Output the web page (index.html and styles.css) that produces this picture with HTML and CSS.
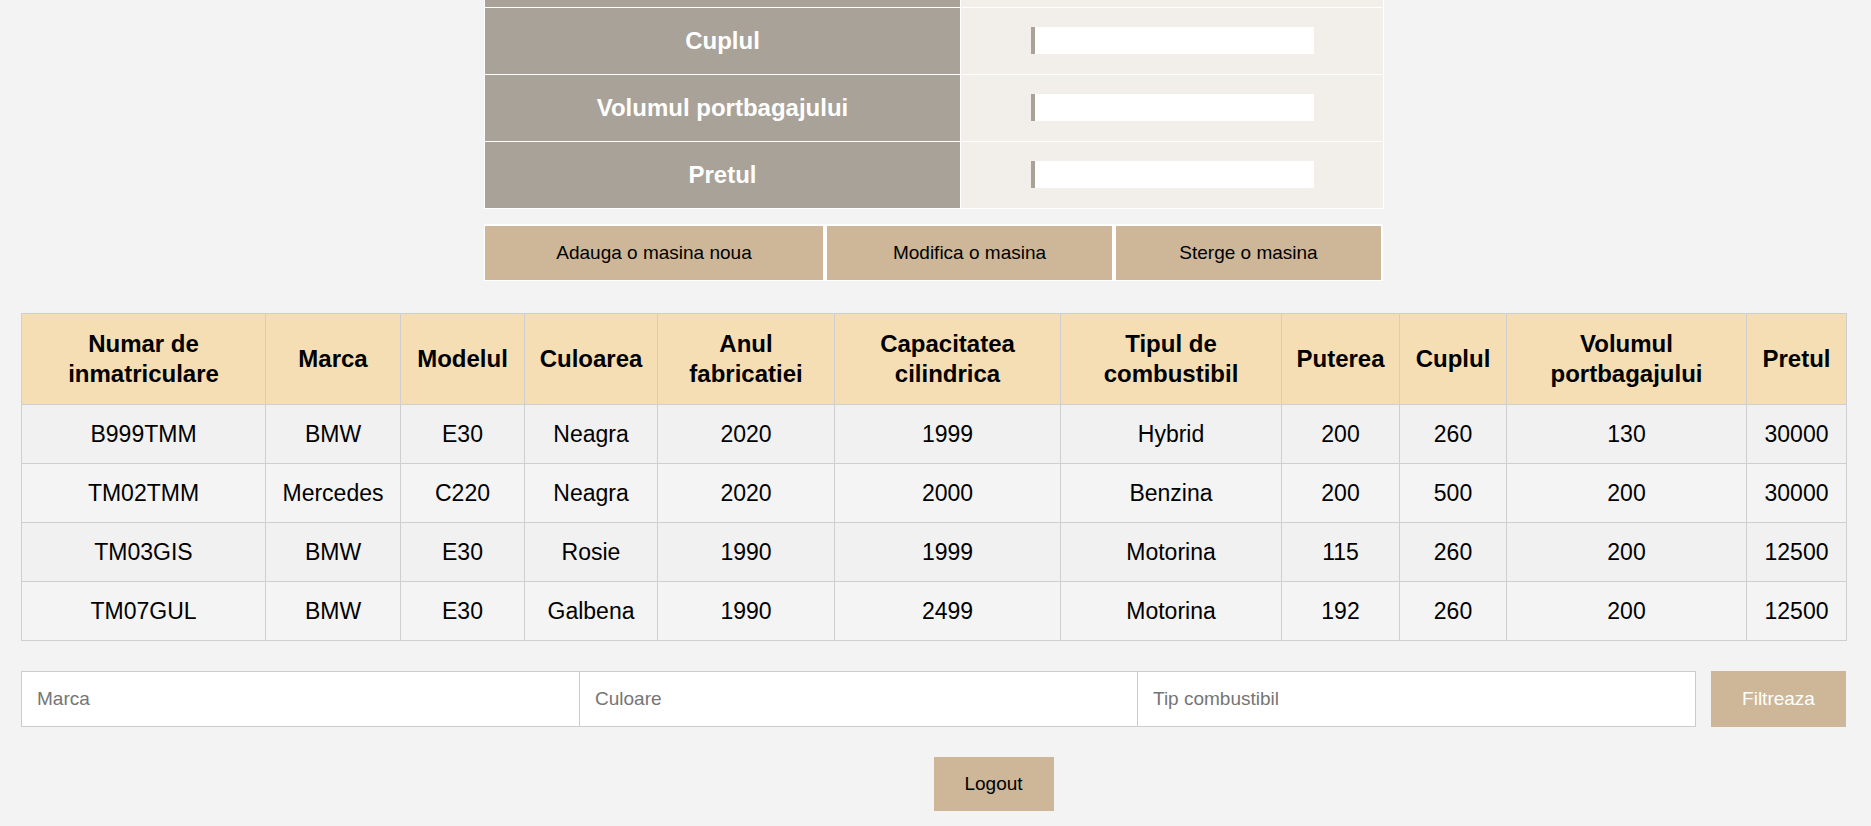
FILE: index.html
```html
<!DOCTYPE html>
<html lang="ro">
<head>
<meta charset="utf-8">
<title>Masini</title>
<link rel="stylesheet" href="styles.css">
</head>
<body>
<main class="page">
  <section class="car-form">
    <table class="form-table">
      <colgroup><col class="label-col"><col class="value-col"></colgroup>
      <tr class="row-cut"><th></th><td></td></tr>
      <tr><th>Cuplul</th><td><input class="field" type="text"></td></tr>
      <tr><th>Volumul portbagajului</th><td><input class="field" type="text"></td></tr>
      <tr><th>Pretul</th><td><input class="field" type="text"></td></tr>
    </table>
    <div class="actions">
      <button class="btn btn-add" type="button">Adauga o masina noua</button>
      <button class="btn btn-edit" type="button">Modifica o masina</button>
      <button class="btn btn-del" type="button">Sterge o masina</button>
    </div>
  </section>

  <table class="cars">
    <colgroup>
      <col class="c1"><col class="c2"><col class="c3"><col class="c4"><col class="c5"><col class="c6">
      <col class="c7"><col class="c8"><col class="c9"><col class="c10"><col class="c11">
    </colgroup>
    <thead>
      <tr>
        <th>Numar de inmatriculare</th><th>Marca</th><th>Modelul</th><th>Culoarea</th><th>Anul fabricatiei</th>
        <th>Capacitatea cilindrica</th><th>Tipul de combustibil</th><th>Puterea</th><th>Cuplul</th>
        <th>Volumul portbagajului</th><th>Pretul</th>
      </tr>
    </thead>
    <tbody>
      <tr><td>B999TMM</td><td>BMW</td><td>E30</td><td>Neagra</td><td>2020</td><td>1999</td><td>Hybrid</td><td>200</td><td>260</td><td>130</td><td>30000</td></tr>
      <tr><td>TM02TMM</td><td>Mercedes</td><td>C220</td><td>Neagra</td><td>2020</td><td>2000</td><td>Benzina</td><td>200</td><td>500</td><td>200</td><td>30000</td></tr>
      <tr><td>TM03GIS</td><td>BMW</td><td>E30</td><td>Rosie</td><td>1990</td><td>1999</td><td>Motorina</td><td>115</td><td>260</td><td>200</td><td>12500</td></tr>
      <tr><td>TM07GUL</td><td>BMW</td><td>E30</td><td>Galbena</td><td>1990</td><td>2499</td><td>Motorina</td><td>192</td><td>260</td><td>200</td><td>12500</td></tr>
    </tbody>
  </table>

  <form class="filter">
    <div class="filter-fields">
      <input class="filter-input" type="text" placeholder="Marca">
      <input class="filter-input" type="text" placeholder="Culoare">
      <input class="filter-input" type="text" placeholder="Tip combustibil">
    </div>
    <button class="filter-btn" type="button">Filtreaza</button>
  </form>

  <div class="logout-row">
    <button class="logout" type="button">Logout</button>
  </div>
</main>
</body>
</html>
```
FILE: styles.css
```css
* { box-sizing: border-box; }

html, body {
  margin: 0;
  padding: 0;
}

body {
  background: #f3f3f3;
  font-family: "Liberation Sans", Arial, sans-serif;
  color: #000;
  overflow: hidden;
}

.page {
  padding: 0 25px 0 21px;
}

/* ---------- form ---------- */
.car-form {
  width: 899px;
  margin: 0 auto;
}

.form-table {
  width: 899px;
  border-collapse: collapse;
  table-layout: fixed;
}

.label-col { width: 476px; }
.value-col { width: 423px; }

.form-table th,
.form-table td {
  border: 1px solid #fff;
  padding: 0;
  height: 67px;
}

.form-table th {
  background: #a8a298;
  color: #fff;
  font-size: 24px;
  font-weight: bold;
  text-align: center;
}

.form-table td {
  background: #f2efea;
}

.form-table .row-cut th,
.form-table .row-cut td {
  height: 7px;
  border-top: 0 none;
}

.field {
  display: block;
  width: 283px;
  height: 27px;
  margin: 0 auto;
  border: none;
  border-left: 4px solid #a8a298;
  background: #fff;
  padding: 0 4px;
  font: 19px "Liberation Sans", Arial, sans-serif;
}

.actions {
  display: flex;
  gap: 4px;
  margin-top: 15px;
  background: #fff;
  padding: 2px 2px 1px 1px;
}

.btn {
  height: 54px;
  border: none;
  background: #cdb798;
  color: #000;
  font: 19px "Liberation Sans", Arial, sans-serif;
  padding: 0;
}

.btn-add { flex: 338 1 0; }
.btn-edit { flex: 285 1 0; }
.btn-del { flex: 265 1 0; }

/* ---------- table ---------- */
.cars {
  width: 100%;
  margin-top: 32px;
  border-collapse: collapse;
  table-layout: fixed;
}

.c1 { width: 244px; }
.c2 { width: 135px; }
.c3 { width: 124px; }
.c4 { width: 133px; }
.c5 { width: 177px; }
.c6 { width: 226px; }
.c7 { width: 221px; }
.c8 { width: 118px; }
.c9 { width: 107px; }
.c10 { width: 240px; }
.c11 { width: 100px; }

.cars th,
.cars td {
  border: 1px solid #cfcfcf;
  text-align: center;
  vertical-align: middle;
}

.cars th {
  background: #f5deb3;
  font-size: 24px;
  font-weight: bold;
  line-height: 30px;
  padding: 15px 6px;
}

.cars td {
  font-size: 23px;
  line-height: 26px;
  padding: 16px 4px;
}

.cars tbody tr:nth-child(odd) td { background: #f1f1f1; }
.cars tbody tr:nth-child(even) td { background: #f4f4f4; }

/* ---------- filter ---------- */
.filter {
  display: flex;
  gap: 15px;
  margin-top: 30px;
}

.filter-fields {
  display: flex;
  flex: 1;
}

.filter-input {
  flex: 1 1 0;
  min-width: 0;
  height: 56px;
  border: 1px solid #cccccc;
  background: #fff;
  padding: 0 15px;
  font: 19px "Liberation Sans", Arial, sans-serif;
  color: #000;
}

.filter-input + .filter-input { border-left: none; }

.filter-input::placeholder { color: #757575; }

.filter-btn {
  width: 135px;
  height: 56px;
  border: none;
  background: #cdb798;
  color: #fff;
  font: 19px "Liberation Sans", Arial, sans-serif;
}

/* ---------- logout ---------- */
.logout-row {
  margin-top: 30px;
  padding-left: 50%;
}

.logout {
  width: 120px;
  height: 54px;
  border: none;
  background: #cdb798;
  color: #000;
  font: 19px "Liberation Sans", Arial, sans-serif;
}
```
